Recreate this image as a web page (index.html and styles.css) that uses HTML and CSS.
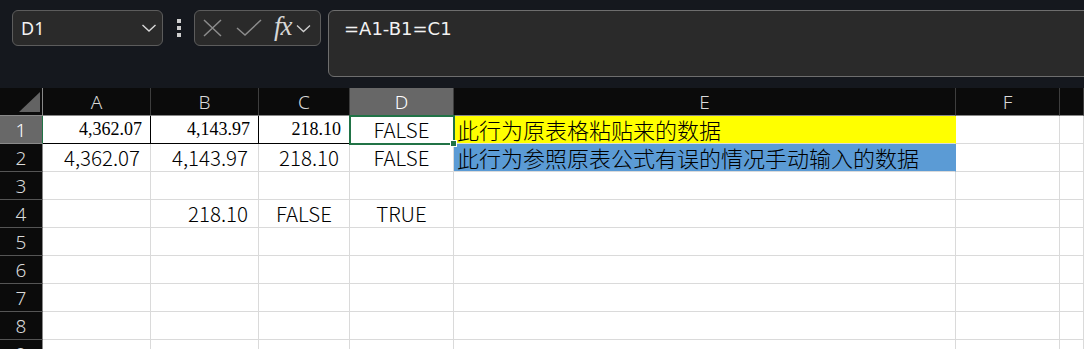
FILE: index.html
```html
<!DOCTYPE html>
<html lang="zh-CN">
<head>
    <meta charset="UTF-8">
    <title>Sheet</title>
    <link rel="stylesheet" href="styles.css">
</head>
<body>
<div id="toolbar">
    <div class="namebox">
        <span>D1</span>
        <svg width="16" height="10" viewBox="0 0 16 10"><path d="M1.5 2 L8 8 L14.5 2" fill="none" stroke="#d8d8d8" stroke-width="1.4"/></svg>
    </div>
    <div class="grip"><i></i><i></i><i></i></div>
    <div class="fbuttons">
        <svg width="22" height="20" viewBox="0 0 22 20"><path d="M2 2 L19 18 M19 2 L2 18" stroke="#8c8c8c" stroke-width="1.5" fill="none"/></svg>
        <svg width="26" height="20" viewBox="0 0 26 20"><path d="M1 10 L9 17 L25 2" stroke="#8c8c8c" stroke-width="1.5" fill="none"/></svg>
        <span class="fx">fx</span>
        <svg width="15" height="9" viewBox="0 0 15 9"><path d="M1 1.5 L7.5 7.5 L14 1.5" fill="none" stroke="#cfcfcf" stroke-width="1.3"/></svg>
    </div>
    <div class="formula">=A1-B1=C1</div>
</div>

<div id="sheet">
    <div class="hd corner"><b></b></div>
    <div class="hd">A</div>
    <div class="hd">B</div>
    <div class="hd">C</div>
    <div class="hd sel">D</div>
    <div class="hd">E</div>
    <div class="hd">F</div>
    <div class="hd"></div>

    <div class="rn sel">1</div>
    <div class="c num serif blk">4,362.07</div>
    <div class="c num serif blk">4,143.97</div>
    <div class="c num serif blkb">218.10</div>
    <div class="c sans mid active">FALSE<span class="handle"></span></div>
    <div class="c sans cn yellow">此行为原表格粘贴来的数据</div>
    <div class="c"></div>
    <div class="c"></div>

    <div class="rn">2</div>
    <div class="c sans num">4,362.07</div>
    <div class="c sans num">4,143.97</div>
    <div class="c sans num">218.10</div>
    <div class="c sans mid">FALSE</div>
    <div class="c sans cn blue">此行为参照原表公式有误的情况手动输入的数据</div>
    <div class="c"></div>
    <div class="c"></div>

    <div class="rn">3</div>
    <div class="c"></div><div class="c"></div><div class="c"></div><div class="c"></div><div class="c"></div><div class="c"></div><div class="c"></div>

    <div class="rn">4</div>
    <div class="c"></div>
    <div class="c sans num">218.10</div>
    <div class="c sans mid">FALSE</div>
    <div class="c sans mid">TRUE</div>
    <div class="c"></div><div class="c"></div><div class="c"></div>

    <div class="rn">5</div>
    <div class="c"></div><div class="c"></div><div class="c"></div><div class="c"></div><div class="c"></div><div class="c"></div><div class="c"></div>
    <div class="rn">6</div>
    <div class="c"></div><div class="c"></div><div class="c"></div><div class="c"></div><div class="c"></div><div class="c"></div><div class="c"></div>
    <div class="rn">7</div>
    <div class="c"></div><div class="c"></div><div class="c"></div><div class="c"></div><div class="c"></div><div class="c"></div><div class="c"></div>
    <div class="rn">8</div>
    <div class="c"></div><div class="c"></div><div class="c"></div><div class="c"></div><div class="c"></div><div class="c"></div><div class="c"></div>
    <div class="rn">9</div>
    <div class="c"></div><div class="c"></div><div class="c"></div><div class="c"></div><div class="c"></div><div class="c"></div><div class="c"></div>
</div>
</body>
</html>
```

FILE: styles.css
```css
*{
    box-sizing: border-box;
}
body{
    margin: 0;
    background: #ffffff;
    overflow: hidden;
    font-family: "Noto Sans", "Noto Sans CJK SC", sans-serif;
}

#toolbar{
    height: 88px;
    background: #15181e;
    display: flex;
    align-items: flex-start;
    padding: 10px 0 0 12px;
}
.namebox{
    width: 151px;
    height: 36px;
    background: #2a2a2a;
    border: 1px solid #5c5c5c;
    border-radius: 6px;
    display: flex;
    align-items: center;
    justify-content: space-between;
    padding: 0 5px 0 8px;
    color: #f2f2f2;
    font-size: 18px;
}
.grip{
    width: 31px;
    height: 36px;
    display: flex;
    flex-direction: column;
    align-items: center;
    justify-content: center;
    gap: 3px;
}
.grip i{
    width: 4px;
    height: 4px;
    background: #cfcfcf;
}
.fbuttons{
    width: 127px;
    height: 36px;
    background: #2a2a2a;
    border: 1px solid #5c5c5c;
    border-radius: 6px;
    display: flex;
    align-items: center;
    padding: 0 0 0 7px;
}
.fbuttons svg:nth-child(2){
    margin-left: 12px;
}
.fx{
    font-family: "Liberation Serif", serif;
    font-style: italic;
    font-size: 27px;
    color: #d6d6d6;
    margin: -4px 4px 0 12px;
    letter-spacing: -1px;
}
.formula{
    flex: 1;
    height: 67px;
    margin: 0 -10px 0 7px;
    background: #2a2a2a;
    border: 1px solid #6e6e6e;
    border-radius: 6px;
    color: #f2f2f2;
    font-family: "DejaVu Sans", sans-serif;
    font-size: 18px;
    padding: 7px 0 0 15px;
}

#sheet{
    display: grid;
    grid-template-columns: 43px 108px 108px 91px 104px 502px 104px 1fr;
    grid-auto-rows: 28px;
}
.hd{
    background: #0b0b0b;
    color: #dadada;
    font-size: 19px;
    font-weight: 300;
    text-align: center;
    line-height: 21px;
    padding-top: 4px;
    border-right: 1px solid #3e3e3e;
    border-bottom: 1px solid #888888;
}
.hd.sel{
    background: #676767;
    color: #ffffff;
}
.corner{
    border-right: 1px solid #888888;
    padding: 4px 2px 3px 19px;
}
.corner b{
    display: block;
    width: 100%;
    height: 100%;
    background: #636363;
    clip-path: polygon(100% 0, 100% 100%, 0 100%);
}
.rn{
    background: #0b0b0b;
    color: #dadada;
    font-size: 19px;
    font-weight: 300;
    text-align: center;
    line-height: 21px;
    padding-top: 4px;
    border-right: 1px solid #888888;
    border-bottom: 1px solid #555555;
}
.rn.sel{
    background: #686868;
    color: #ffffff;
    border-right: 1px solid #217346;
    border-bottom: 1px solid #8a8a8a;
}
.c{
    position: relative;
    border-right: 1px solid #dadada;
    border-bottom: 1px solid #dadada;
    line-height: 27px;
    color: #000000;
    white-space: nowrap;
}
.sans{
    font-family: "Noto Sans CJK SC", sans-serif;
    font-size: 20.5px;
    font-weight: 300;
}
.num{
    text-align: right;
    padding-right: 10px;
}
.serif{
    font-family: "Liberation Serif", serif;
    font-size: 18px;
    padding-right: 8px;
}
.blk{
    border-right-color: #000000;
    border-bottom-color: #000000;
}
.blkb{
    border-bottom-color: #000000;
}
.mid{
    text-align: center;
}
.cn{
    font-size: 22px;
    padding-left: 3px;
    line-height: 27px;
}
.yellow{
    background: #ffff00;
    border-right-color: #ffff00;
}
.blue{
    background: #5b9bd5;
    border-right-color: #5b9bd5;
}
.active{
    outline: 2px solid #217346;
    outline-offset: -1px;
    z-index: 1;
}
.handle{
    position: absolute;
    right: -4px;
    bottom: -4px;
    width: 7px;
    height: 7px;
    background: #217346;
    border: 1px solid #ffffff;
}
```
